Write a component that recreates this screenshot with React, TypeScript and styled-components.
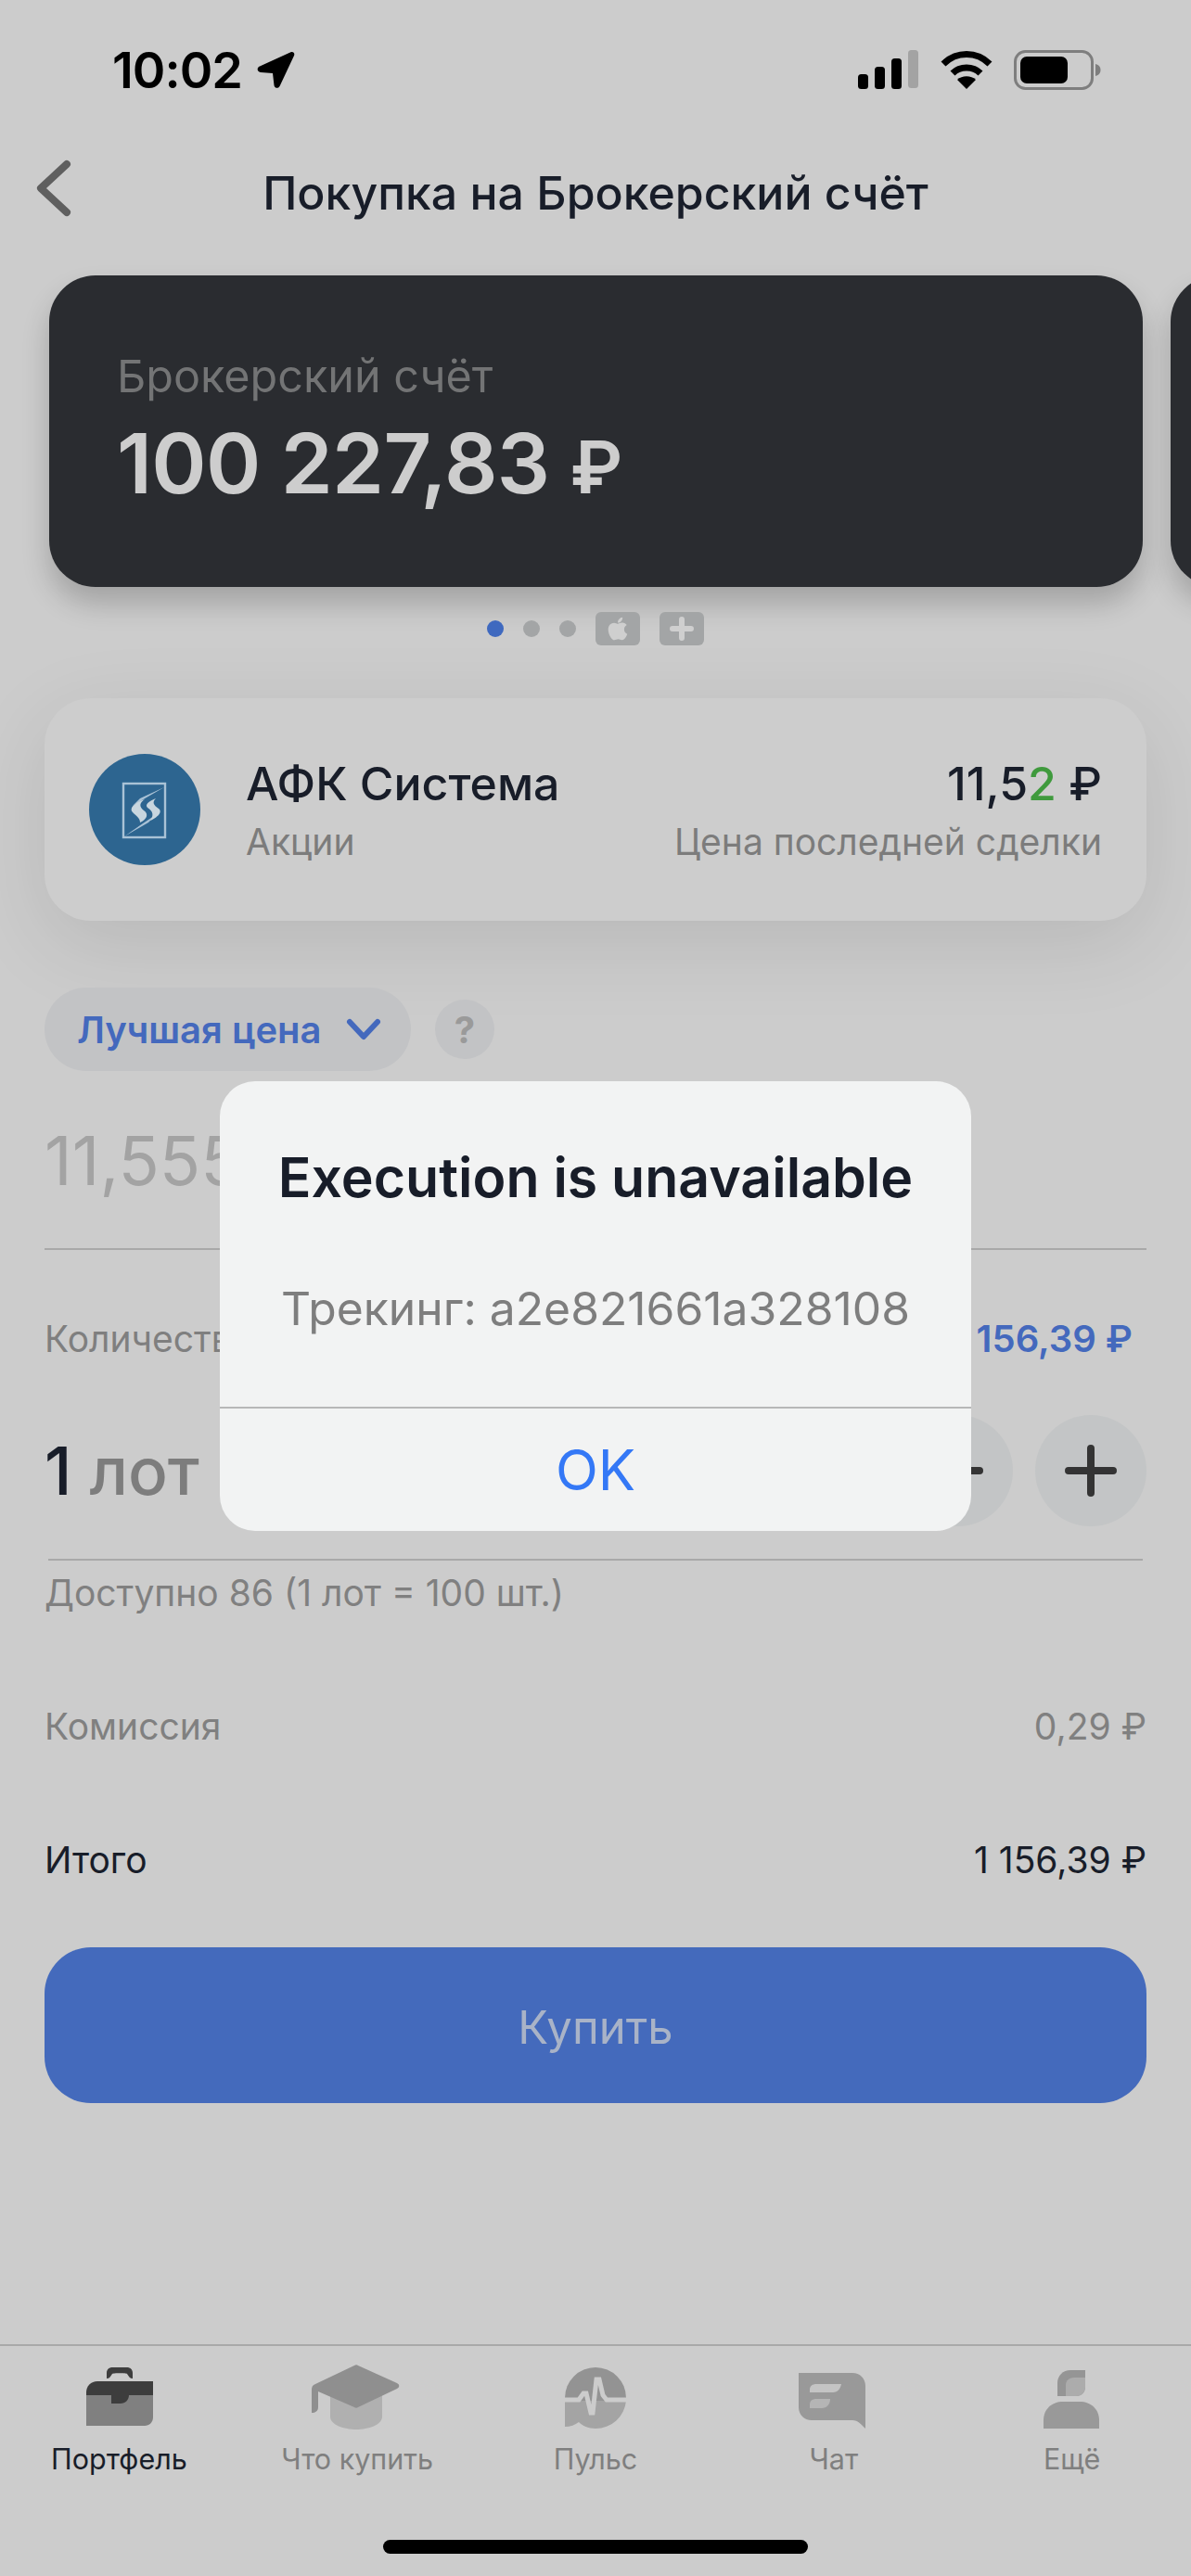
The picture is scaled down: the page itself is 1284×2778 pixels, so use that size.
import React from 'react';
import styled, { createGlobalStyle } from 'styled-components';
import { FaApple } from 'react-icons/fa';

const GlobalStyle = createGlobalStyle`
  html, body {
    margin: 0;
    padding: 0;
    background: #cccccc;
    font-family: Inter, "Noto Sans", sans-serif;
  }
  * { box-sizing: border-box; }
`;

const Screen = styled.div`
  position: relative;
  width: 1284px;
  height: 2778px;
  overflow: hidden;
  display: flex;
  flex-direction: column;
  background: #cccccc;
  color: #181d29;
`;

const StatusBar = styled.div`
  height: 150px;
  flex: none;
  display: flex;
  align-items: flex-start;
  justify-content: space-between;
  padding: 54px 97px 0 121px;
`;

const Time = styled.div`
  display: flex;
  align-items: center;
  gap: 16px;
  height: 43px;
  font-size: 54px;
  font-weight: 600;
  letter-spacing: -1px;
  color: #000;
`;

const StatusIcons = styled.div`
  display: flex;
  align-items: flex-start;
  gap: 22px;
`;

const Nav = styled.div`
  position: relative;
  height: 116px;
  flex: none;
  display: flex;
  align-items: center;
  justify-content: center;
`;

const BackIcon = styled.svg`
  position: absolute;
  left: 36px;
  top: 21px;
`;

const NavTitle = styled.div`
  font-size: 50px;
  font-weight: 500;
  line-height: 116px;
`;

const Carousel = styled.div`
  display: flex;
  flex: none;
  gap: 30px;
  margin-top: 31px;
  padding-left: 53px;
`;

const AccountCard = styled.div`
  width: 1179px;
  height: 336px;
  flex: none;
  border-radius: 50px;
  background: #2a2c30;
  box-shadow: 0 18px 30px rgba(0, 0, 0, 0.2);
  padding: 80px 0 0 73px;
`;

const AccountLabel = styled.div`
  font-size: 48.5px;
  line-height: 58px;
  color: #737475;
`;

const AccountAmount = styled.div`
  margin-top: 12px;
  font-size: 90px;
  line-height: 106px;
  font-weight: 600;
  letter-spacing: -0.7px;
  color: #cdcdcd;
`;

const AmountCurrency = styled.span`
  font-size: 78px;
`;

const Pager = styled.div`
  display: flex;
  flex: none;
  align-items: center;
  justify-content: center;
  gap: 21px;
  height: 36px;
  margin-top: 27px;
`;

const Dot = styled.span<{ $active?: boolean }>`
  width: 18px;
  height: 18px;
  border-radius: 50%;
  background: ${p => (p.$active ? '#3f69bf' : '#a3a5a6')};
`;

const PagerTile = styled.span`
  width: 48px;
  height: 36px;
  border-radius: 6px;
  background: #a3a5a6;
  color: #cfcfcf;
  display: flex;
  align-items: center;
  justify-content: center;
`;

const Content = styled.div`
  display: flex;
  flex-direction: column;
  flex: none;
  padding: 0 48px;
`;

const StockCard = styled.div`
  height: 240px;
  margin-top: 57px;
  border-radius: 50px;
  background: #cdcdcd;
  box-shadow: 0 24px 90px rgba(0, 0, 0, 0.1);
  display: flex;
  align-items: center;
  padding: 0 48px;
`;

const StockInfo = styled.div`
  flex: 1;
  margin-left: 49px;
`;

const StockName = styled.div`
  font-size: 50px;
  line-height: 58px;
  font-weight: 500;
`;

const SubLabel = styled.div`
  margin-top: 11px;
  font-size: 39px;
  line-height: 46px;
  color: #7c7c7c;
`;

const StockPrice = styled.div`
  text-align: right;
`;

const Green = styled.span`
  color: #3f9a3d;
`;

const OrderTypeRow = styled.div`
  display: flex;
  align-items: center;
  gap: 26px;
  margin-top: 72px;
`;

const OrderTypePill = styled.div`
  width: 395px;
  height: 90px;
  border-radius: 45px;
  background: #c2c3c5;
  display: flex;
  align-items: center;
  gap: 26px;
  padding-left: 35px;
  font-size: 40px;
  font-weight: 600;
  color: #4469bd;
`;

const HelpBadge = styled.div`
  width: 64px;
  height: 64px;
  border-radius: 50%;
  background: #c2c3c5;
  color: #9a9a9a;
  font-size: 40px;
  font-weight: 700;
  display: flex;
  align-items: center;
  justify-content: center;
`;

const PriceInput = styled.div`
  margin-top: 25px;
  height: 168px;
  padding-bottom: 22px;
  border-bottom: 2px solid #a9a9a9;
  font-size: 73px;
  line-height: 144px;
  color: #a3a3a3;
`;

const QtyHeader = styled.div`
  display: flex;
  justify-content: space-between;
  margin-top: 73px;
  padding-right: 15px;
  font-size: 39px;
  line-height: 46px;
  color: #7f7f7f;
`;

const QtySum = styled.span`
  font-size: 40px;
  font-weight: 600;
  color: #4469bd;
`;

const Stepper = styled.div`
  display: flex;
  align-items: center;
  height: 120px;
  margin-top: 59px;
  gap: 24px;
`;

const LotValue = styled.div`
  flex: 1;
  font-size: 71px;
  font-weight: 500;
  color: #7d7d7d;
`;

const LotCount = styled.span`
  color: #181d29;
`;

const RoundButton = styled.div`
  width: 120px;
  height: 120px;
  border-radius: 50%;
  background: #c3c5c6;
  display: flex;
  align-items: center;
  justify-content: center;
`;

const Rule = styled.div`
  height: 2px;
  margin: 35px 4px 0;
  background: #a9a9a9;
`;

const Hint = styled.div`
  margin-top: 12px;
  font-size: 39px;
  line-height: 46px;
  color: #808080;
`;

const SummaryRow = styled.div<{ $strong?: boolean }>`
  display: flex;
  justify-content: space-between;
  margin-top: 98px;
  font-size: 39px;
  line-height: 46px;
  color: ${p => (p.$strong ? '#181d29' : '#808080')};
`;

const BuyButton = styled.div`
  height: 168px;
  margin-top: 71px;
  padding-top: 4px;
  border-radius: 50px;
  background: #446abc;
  color: #a9b3c7;
  font-size: 49px;
  display: flex;
  align-items: center;
  justify-content: center;
`;

const Spacer = styled.div`
  flex: 1;
`;

const TabBar = styled.div`
  flex: none;
  display: grid;
  grid-template-columns: repeat(5, 1fr);
  height: 194px;
  padding-top: 20px;
  border-top: 2px solid #a9a9a9;
`;

const Tab = styled.div<{ $active?: boolean }>`
  display: flex;
  flex-direction: column;
  align-items: center;
  font-size: 30.5px;
  color: ${p => (p.$active ? '#181d29' : '#7f7f7f')};
`;

const TabLabel = styled.div`
  margin-top: 12px;
  line-height: 36px;
`;

const HomeBar = styled.div`
  flex: none;
  height: 15px;
  width: 458px;
  margin: 17px auto 24px;
  border-radius: 8px;
  background: #000;
`;

const Modal = styled.div`
  position: absolute;
  left: 237px;
  top: 1166px;
  width: 810px;
  height: 485px;
  border-radius: 38px;
  background: #f2f3f3;
  display: flex;
  flex-direction: column;
  align-items: center;
`;

const ModalTitle = styled.div`
  margin-top: 66px;
  font-size: 59px;
  line-height: 76px;
  font-weight: 600;
`;

const ModalBody = styled.div`
  margin-top: 73px;
  font-size: 49.8px;
  line-height: 60px;
  color: #7e7e7e;
`;

const ModalAction = styled.div`
  width: 100%;
  flex: 1;
  margin-top: 76px;
  border-top: 2px solid #b7b7b7;
  color: #3478f6;
  font-size: 60px;
  display: flex;
  align-items: center;
  justify-content: center;
`;

const SignalIcon = () => (
  <svg width="66" height="42" viewBox="0 0 66 42">
    <rect x="0" y="26" width="11" height="16" rx="3.5" fill="#000" />
    <rect x="18" y="18" width="11" height="24" rx="3.5" fill="#000" />
    <rect x="36" y="9" width="11" height="33" rx="3.5" fill="#000" />
    <rect x="54" y="0" width="11" height="41" rx="3.5" fill="#a3a3a3" />
  </svg>
);

const WifiIcon = () => (
  <svg width="58" height="42" viewBox="0 0 58 42">
    <path d="M4 15 C18 1 40 1 54 15" fill="none" stroke="#000" strokeWidth="7" />
    <path d="M14 25 C22 17 36 17 44 25" fill="none" stroke="#000" strokeWidth="7" />
    <path d="M29 42 L19 32 C24 27 34 27 39 32 Z" fill="#000" />
  </svg>
);

const BatteryIcon = () => (
  <svg width="94" height="43" viewBox="0 0 94 43">
    <rect x="1.5" y="1.5" width="83" height="40" rx="11" fill="none" stroke="#7e7e7e" strokeWidth="3" />
    <rect x="7" y="7" width="51" height="29" rx="7" fill="#000" />
    <path d="M88 15 C92 16 93.5 18.5 93.5 21.5 C93.5 24.5 92 27 88 28 Z" fill="#7e7e7e" />
  </svg>
);

const LocationIcon = () => (
  <svg width="41" height="41" viewBox="0 0 41 41">
    <path d="M37 1 C39.5 0.5 41 2.5 40 5 L25 37 C23.5 41 19 40.5 18.5 37 L17 24 L4 23 C0 22.5 -0.5 18 3 16.5 Z" fill="#000" />
  </svg>
);

const SistemaLogo = () => (
  <svg width="120" height="120" viewBox="0 0 120 120" style={{ flex: 'none' }}>
    <circle cx="60" cy="60" r="60" fill="#2d6590" />
    <rect x="37" y="32" width="45" height="58" fill="none" stroke="#a9c2d6" strokeWidth="2.4" />
    <path d="M81 36 L55 48 L47 56 L62 47 Z" fill="#a9c2d6" />
    <path d="M38 89 L64 74 L73 65 L58 75 Z" fill="#a9c2d6" />
    <path d="M60 49 C48 53 43 59 47 63 C51 67 55 69 55 74 C62 71 65 65 59 61 C54 57 54 53 60 49 Z" fill="#c8d6df" />
    <path d="M72 48 C64 51 60 55 63 58 C69 62 70 66 66 72 C73 69 80 63 75 59 C69 55 68 52 72 48 Z" fill="#c8d6df" />
  </svg>
);

const BriefcaseIcon = () => (
  <svg width="100" height="72" viewBox="0 0 100 72">
    <path d="M15 33 H87 V57 C87 62 83 66 78 66 H15 Z" fill="#808080" />
    <path d="M15 33 V30 C15 23 20 18 27 18 H87 V33 Z" fill="#3d3d3d" />
    <path d="M42 33 H61 C61 38 57 42 52 42 H42 Z" fill="#3d3d3d" />
    <path d="M37 15 V9 C37 5 40 3 43 3 H59 C62 3 65 5 65 9 V15 C62 15 61 13 59 10 C58 9 44 9 43 10 C41 13 40 15 37 15 Z" fill="#3d3d3d" />
  </svg>
);

const CapIcon = () => (
  <svg width="100" height="72" viewBox="0 0 100 72">
    <path d="M21 32 H77 V56 C77 65 62 70 49 70 C36 70 21 65 21 56 Z" fill="#b0b0b0" />
    <path d="M47 1 C48.5 0 50 0 51 1 L93 20 C96 21.5 96 24.5 93 26 L51 46 C50 47 48 47 47 46 L8 29 V46 C8 50 5 52 1 52 V27 C1 24 2 22 5 21 Z" fill="#8f8f8f" />
  </svg>
);

const PulseIcon = () => (
  <svg width="100" height="72" viewBox="0 0 100 72">
    <path d="M17 36 A33 33 0 0 1 83 36 V39 H17 Z" fill="#939393" />
    <path d="M17 39 H83 A33 33 0 0 1 50 69 C42 69 36 66 32 62 C28 65 23 67 17 67 Z" fill="#a4a4a4" />
    <path d="M17 38 H32 L37 31 L40 31 L45 52 L47 52 L51 16 L54 16 L58 33 L62 38 H83" fill="none" stroke="#cccccc" strokeWidth="5" />
  </svg>
);

const ChatIcon = () => (
  <svg width="100" height="72" viewBox="0 0 100 72">
    <path d="M12 9 H70 C78 9 84 15 84 23 V69 C80 65 76 60 70 60 H26 C18 60 12 54 12 46 Z" fill="#999999" />
    <path d="M24 30 V27 C24 23 27 21 31 21 H58 C57 26 54 30 49 30 Z" fill="#c4c4c4" />
    <path d="M24 47 V43 C24 39 27 37 31 37 H46 C46 43 42 47 37 47 Z" fill="#b5b5b5" />
  </svg>
);

const PersonIcon = () => (
  <svg width="100" height="72" viewBox="0 0 100 72">
    <path d="M34 34 V20 C34 12 40 6 48 6 H64 V24 C64 30 60 34 54 34 Z" fill="#959595" />
    <path d="M43 34 V22 C43 17 47 14 52 14 H64 V24 C64 30 60 34 54 34 Z" fill="#acacac" />
    <path d="M19 69 V60 C19 48 28 40 40 40 H58 C70 40 79 48 79 60 V69 Z" fill="#999999" />
  </svg>
);

const App: React.FC = () => {
  return (
    <Screen>
      <GlobalStyle />
      <StatusBar>
        <Time>
          10:02
          <LocationIcon />
        </Time>
        <StatusIcons>
          <SignalIcon />
          <WifiIcon />
          <BatteryIcon />
        </StatusIcons>
      </StatusBar>

      <Nav>
        <BackIcon width="44" height="64" viewBox="0 0 44 64">
          <path d="M36 6 L8 32 L36 58" fill="none" stroke="#5f5f5f" strokeWidth="8" strokeLinecap="round" strokeLinejoin="round" />
        </BackIcon>
        <NavTitle>Покупка на Брокерский счёт</NavTitle>
      </Nav>

      <Carousel>
        <AccountCard>
          <AccountLabel>Брокерский счёт</AccountLabel>
          <AccountAmount>
            100 227,83 <AmountCurrency>₽</AmountCurrency>
          </AccountAmount>
        </AccountCard>
        <AccountCard />
      </Carousel>

      <Pager>
        <Dot $active />
        <Dot />
        <Dot />
        <PagerTile>
          <FaApple size={28} />
        </PagerTile>
        <PagerTile>
          <svg width="26" height="26" viewBox="0 0 26 26">
            <path d="M13 3 V23 M3 13 H23" stroke="#cfcfcf" strokeWidth="6" strokeLinecap="round" />
          </svg>
        </PagerTile>
      </Pager>

      <Content>
        <StockCard>
          <SistemaLogo />
          <StockInfo>
            <StockName>АФК Система</StockName>
            <SubLabel>Акции</SubLabel>
          </StockInfo>
          <StockPrice>
            <StockName>
              11,5<Green>2</Green> ₽
            </StockName>
            <SubLabel>Цена последней сделки</SubLabel>
          </StockPrice>
        </StockCard>

        <OrderTypeRow>
          <OrderTypePill>
            Лучшая цена
            <svg width="38" height="24" viewBox="0 0 38 24">
              <path d="M4 4 L19 20 L34 4" fill="none" stroke="#4469bd" strokeWidth="6" strokeLinecap="round" strokeLinejoin="round" />
            </svg>
          </OrderTypePill>
          <HelpBadge>?</HelpBadge>
        </OrderTypeRow>

        <PriceInput>11,555</PriceInput>

        <QtyHeader>
          <span>Количество</span>
          <QtySum>1 156,39 ₽</QtySum>
        </QtyHeader>

        <Stepper>
          <LotValue>
            <LotCount>1</LotCount> лот
          </LotValue>
          <RoundButton>
            <svg width="56" height="8" viewBox="0 0 56 8">
              <path d="M4 4 H52" stroke="#343434" strokeWidth="8" strokeLinecap="round" />
            </svg>
          </RoundButton>
          <RoundButton>
            <svg width="56" height="56" viewBox="0 0 56 56">
              <path d="M4 28 H52 M28 4 V52" stroke="#343434" strokeWidth="8" strokeLinecap="round" />
            </svg>
          </RoundButton>
        </Stepper>
        <Rule />

        <Hint>Доступно 86 (1 лот = 100 шт.)</Hint>

        <SummaryRow>
          <span>Комиссия</span>
          <span>0,29 ₽</span>
        </SummaryRow>
        <SummaryRow $strong>
          <span>Итого</span>
          <span>1 156,39 ₽</span>
        </SummaryRow>

        <BuyButton>Купить</BuyButton>
      </Content>

      <Spacer />

      <TabBar>
        <Tab $active>
          <BriefcaseIcon />
          <TabLabel>Портфель</TabLabel>
        </Tab>
        <Tab>
          <CapIcon />
          <TabLabel>Что купить</TabLabel>
        </Tab>
        <Tab>
          <PulseIcon />
          <TabLabel>Пульс</TabLabel>
        </Tab>
        <Tab>
          <ChatIcon />
          <TabLabel>Чат</TabLabel>
        </Tab>
        <Tab>
          <PersonIcon />
          <TabLabel>Ещё</TabLabel>
        </Tab>
      </TabBar>
      <HomeBar />

      <Modal>
        <ModalTitle>Execution is unavailable</ModalTitle>
        <ModalBody>Трекинг: a2e821661a328108</ModalBody>
        <ModalAction>OK</ModalAction>
      </Modal>
    </Screen>
  );
};

export default App;
